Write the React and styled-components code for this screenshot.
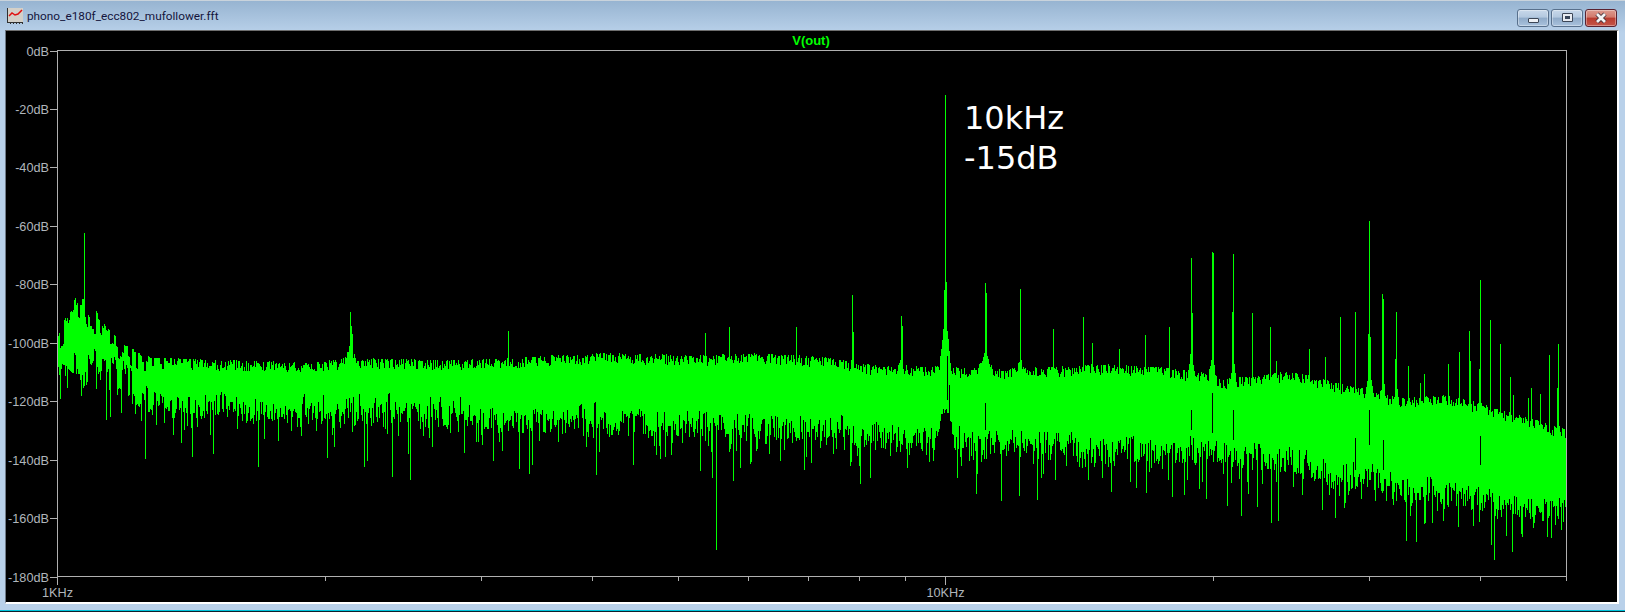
import React, { useMemo } from "react";
import styled, { createGlobalStyle } from "styled-components";

const GlobalStyle = createGlobalStyle`
    html, body {
        margin: 0;
        height: 100%;
        background: #10202c;
        overflow: hidden;
    }
`;

// plot frame in page pixels
const LEFT = 57.5;
const RIGHT = 1566.5;
const TOP = 50.5;
const BOTTOM = 576.5;
const DECADE = 888;

const dbTicks = [0, -20, -40, -60, -80, -100, -120, -140, -160, -180];
const freqTicks = [2, 3, 4, 5, 6, 7, 8, 9, 20, 30, 40, 50];

// [x, y] points read off the trace
const upperEdge = [
    [57, 338], [62, 325], [70, 305], [78, 293], [84, 298], [90, 312], [96, 310], [105, 326],
    [118, 338], [127, 343], [135, 350], [150, 357], [160, 358], [200, 359], [300, 362], [350, 358],
    [460, 360], [500, 358], [600, 353], [700, 355], [760, 353], [830, 357], [860, 364], [930, 366],
    [1000, 369], [1100, 364], [1160, 367], [1200, 372], [1220, 379], [1290, 371], [1340, 383],
    [1400, 397], [1450, 395], [1500, 409], [1566, 429],
];
const lowerEdge = [
    [57, 372], [80, 366], [100, 362], [120, 376], [140, 396], [160, 408], [300, 412], [350, 412],
    [460, 416], [500, 422], [700, 426], [860, 432], [900, 442], [1000, 443], [1100, 452], [1200, 455],
    [1220, 455], [1290, 464], [1340, 474], [1400, 489], [1450, 496], [1500, 506], [1566, 514],
];

// harmonics: [x, top of the line]
const lines = [
    [84, 233], [350, 312], [351, 326], [352, 334], [508, 331], [705, 333], [729, 327], [796, 327],
    [852, 295], [853, 332], [901, 316], [902, 326], [945, 95], [946, 282], [944, 290], [985, 283],
    [986, 293], [1020, 289], [1053, 329], [1083, 317], [1092, 343], [1119, 349], [1145, 335], [1169, 327],
    [1191, 258], [1192, 313], [1212, 252], [1213, 253], [1233, 254], [1232, 312], [1252, 313], [1270, 327],
    [1276, 361], [1309, 349], [1325, 357], [1340, 317], [1355, 312], [1369, 221], [1368, 334], [1370, 337],
    [1382, 294], [1383, 299], [1396, 312], [1395, 359], [1408, 366], [1420, 383], [1424, 374], [1448, 364],
    [1459, 352], [1469, 331], [1470, 361], [1480, 280], [1479, 369], [1490, 320], [1500, 344], [1510, 377],
    [1513, 395], [1528, 398], [1531, 388], [1540, 394], [1549, 355], [1558, 344], [1557, 388], [1566, 292],
];

// [x, half width, top]
const skirts = [
    [350, 8, 340], [852, 3, 350], [901, 3, 340], [945, 9, 300], [985, 13, 350], [1020, 5, 352], [1191, 6, 345],
    [1212, 6, 348], [1233, 5, 352], [1369, 5, 352], [1383, 4, 368], [1396, 3, 374], [1469, 3, 398], [1480, 6, 402],
    [1558, 3, 410],
];

// [x, bottom of the line]
const dips = [
    [60, 399], [106, 420], [110, 417], [145, 459], [192, 457], [213, 454], [258, 467], [327, 458], [364, 467],
    [367, 461], [392, 477], [410, 480], [464, 453], [493, 461], [519, 469], [529, 474], [532, 465], [596, 475],
    [633, 465], [665, 457], [700, 471], [712, 478], [716, 550], [733, 481], [740, 468], [750, 464], [804, 470],
    [859, 466], [860, 484], [870, 478], [957, 478], [976, 494], [1001, 501], [1019, 496], [1037, 500], [1055, 480],
    [1088, 480], [1102, 478], [1130, 482], [1136, 488], [1172, 497], [1184, 495], [1206, 499], [1227, 506],
    [1241, 516], [1257, 507], [1271, 523], [1278, 521], [1322, 510], [1335, 518], [1344, 508], [1406, 541],
    [1416, 542], [1432, 523], [1443, 521], [1473, 526], [1491, 545], [1494, 560], [1506, 536], [1512, 552],
    [1522, 537], [1533, 528], [1555, 525], [1561, 530],
];

// black slits inside the trace next to the harmonics: [x, from, to]
const slits = [
    [947, 356, 400], [949, 385, 410], [985, 403, 430], [1191, 410, 430], [1212, 393, 433],
    [1233, 410, 440], [1355, 438, 470], [1369, 410, 445], [1383, 440, 470], [1480, 436, 465],
];

const interpolate = (points, x) => {
    for (let i = 1; i < points.length; i++) {
        if (x <= points[i][0]) {
            const [x0, y0] = points[i - 1];
            const [x1, y1] = points[i];
            return y0 + ((y1 - y0) * (x - x0)) / (x1 - x0);
        }
    }
    return points[points.length - 1][1];
};

const seeded = (seed) => () => {
    seed = (seed + 0x6d2b79f5) | 0;
    let t = Math.imul(seed ^ (seed >>> 15), 1 | seed);
    t = (t + Math.imul(t ^ (t >>> 7), 61 | t)) ^ t;
    return ((t ^ (t >>> 14)) >>> 0) / 4294967296;
};

const buildTrace = () => {
    const random = seeded(4711);
    const peak = Object.fromEntries(lines);
    const dip = Object.fromEntries(dips);
    let d = "";
    let a = 0;
    let b = 0;
    let drift = 0;

    for (let x = 57; x <= 1566; x++) {
        const rough = Math.max(0, Math.min(1, (175 - x) / 60));
        if (x >= 175 || x % 2 === 0) {
            a = random();
            b = random();
        }
        // the lower edge wanders a little, in clumps
        drift = drift * 0.86 + (random() - 0.5) * 5;

        let top = interpolate(upperEdge, x) + Math.pow(a, 1.5) * (11 + rough * 13);
        let bottom = interpolate(lowerEdge, x) + drift + (b - 0.6) * (26 + rough * 10);

        // plenty of longer strokes below the solid band
        if (random() < 0.28) bottom += Math.pow(random(), 1.5) * 30;

        skirts.forEach(([px, w, skirtTop]) => {
            const dist = Math.abs(x - px);
            if (dist < w) {
                const k = Math.pow(1 - dist / w, 2.2);
                top = Math.min(top, top - (top - skirtTop) * k);
            }
        });

        // the band pinches right at the fundamental
        if (x > 934 && x < 958) bottom = Math.min(bottom, 408 + Math.max(0, Math.abs(x - 945) - 4) * 7 + random() * 8);

        if (peak[x]) top = peak[x];
        if (dip[x]) bottom = dip[x];

        d += `M${x + 0.5} ${Math.round(top)}V${Math.round(bottom)}`;
    }
    return d;
};

const Spectrum = () => {
    const trace = useMemo(buildTrace, []);
    const logX = (k) => LEFT + DECADE * Math.log10(k);

    return (
        <PlotSvg viewBox="6 31 1611 571">
            <Trace d={trace} />
            <Slits d={slits.map(([x, a, b]) => `M${x + 0.5} ${a}V${b}`).join("")} />
            <Axis d={`M${LEFT} ${TOP}H${RIGHT}V${BOTTOM}H${LEFT}Z`} />
            {dbTicks.map((db, i) => {
                const y = Math.round(TOP + (i * (BOTTOM - TOP)) / 9) + 0.5;
                return (
                    <g key={db}>
                        <Axis d={`M50 ${y}H${LEFT}`} />
                        <AxisLabel x={49} y={y + 4} textAnchor="end">
                            {db}dB
                        </AxisLabel>
                    </g>
                );
            })}
            {freqTicks.map((k) => (
                <Axis key={k} d={`M${Math.round(logX(k)) + 0.5} ${BOTTOM}v4`} />
            ))}
            <Axis d={`M${LEFT} ${BOTTOM}v8`} />
            <Axis d={`M${logX(10)} ${BOTTOM}v8`} />
            <AxisLabel x={LEFT} y={597} textAnchor="middle">
                1KHz
            </AxisLabel>
            <AxisLabel x={logX(10)} y={597} textAnchor="middle">
                10KHz
            </AxisLabel>
            <TraceName x={811} y={45} textAnchor="middle">
                V(out)
            </TraceName>
        </PlotSvg>
    );
};

const AppIcon = () => (
    <svg width="16" height="16" viewBox="0 0 16 16" shapeRendering="crispEdges">
        <rect x="0" y="0" width="16" height="15" fill="#d4d0c8" />
        <path d="M0.5 0V14M0 14.5H16M3.5 14v2M6.5 14v2M9.5 14v2M12.5 14v2M15.5 14v2" stroke="#303030" fill="none" />
        <path
            d="M2 8L5 5L8 7L11 6L15 2"
            stroke="#e01010"
            strokeWidth="1.5"
            fill="none"
            shapeRendering="auto"
        />
    </svg>
);

export default function App() {
    return (
        <>
            <GlobalStyle />
            <Window>
                <TitleBar>
                    <AppIcon />
                    <Title>phono_e180f_ecc802_mufollower.fft</Title>
                    <Controls>
                        <ControlButton aria-label="minimize">
                            <MinimizeGlyph />
                        </ControlButton>
                        <ControlButton aria-label="maximize">
                            <MaximizeGlyph />
                        </ControlButton>
                        <ControlButton $close aria-label="close">
                            <svg width="14" height="12" viewBox="0 0 14 12">
                                <path d="M3 2L11 10M11 2L3 10" stroke="#3a2a34" strokeWidth="4.4" />
                                <path d="M3 2L11 10M11 2L3 10" stroke="#f4f4f4" strokeWidth="2.8" />
                            </svg>
                        </ControlButton>
                    </Controls>
                </TitleBar>
                <PlotPane>
                    <Spectrum />
                    <Annotation>
                        10kHz
                        <br />
                        -15dB
                    </Annotation>
                </PlotPane>
            </Window>
        </>
    );
}

const Window = styled.div`
    height: 610px;
    box-sizing: border-box;
    padding: 0 6px 6px 5px;
    display: flex;
    flex-direction: column;
    background: linear-gradient(#97b4d1 0, #b9d1ea 32px);
    border-top: 1px solid #c9d3dc;
    box-shadow: 0 1px 0 #00c4dc;
`;

const TitleBar = styled.div`
    height: 29px;
    flex: none;
    display: flex;
    align-items: center;
    padding: 0 0 0 2px;
`;

const Title = styled.span`
    margin: 1px 0 0 4px;
    font: 11.8px/16px Roboto, "Noto Sans", sans-serif;
    color: #14143c;
`;

const Controls = styled.div`
    margin-left: auto;
    margin-right: 2px;
    align-self: flex-start;
    padding-top: 8px;
    display: flex;
    gap: 2px;
`;

const ControlButton = styled.div`
    width: 32px;
    height: 18px;
    box-sizing: border-box;
    display: flex;
    align-items: center;
    justify-content: center;
    border: 1px solid ${(p) => (p.$close ? "#5a2230" : "#58708c")};
    border-radius: 3px;
    box-shadow: inset 0 0 0 1px rgba(255, 255, 255, 0.35);
    background: ${(p) =>
        p.$close
            ? "linear-gradient(#dc9a8e 0, #d2796c 45%, #b93b2e 50%, #c4564a 100%)"
            : "linear-gradient(#c8d8ea 0, #b3c8df 45%, #8faac8 50%, #a9c2dd 100%)"};
`;

const MinimizeGlyph = styled.div`
    width: 11px;
    height: 5px;
    margin-top: 4px;
    box-sizing: border-box;
    background: #eef1f5;
    border: 1px solid #3c4656;
    border-radius: 1px;
`;

const MaximizeGlyph = styled.div`
    width: 11px;
    height: 9px;
    box-sizing: border-box;
    background: #39465a;
    border: 1px solid #3c4656;
    border-radius: 1px;
    box-shadow: inset 0 0 0 2px #e8ecf2;
    margin-bottom: 1px;
`;

const PlotPane = styled.div`
    position: relative;
    flex: 1;
    min-height: 0;
    background: #000;
    border-style: solid;
    border-color: #6e6e6e #fff #fff #6e7a88;
    border-width: 1px 2px 2px 1px;
`;

const PlotSvg = styled.svg`
    display: block;
    width: 1611px;
    height: 571px;
`;

const Trace = styled.path`
    fill: none;
    stroke: #00ff00;
    stroke-width: 1;
    shape-rendering: crispEdges;
`;

const Slits = styled(Trace)`
    stroke: #000;
`;

const Axis = styled.path`
    fill: none;
    stroke: #b0b0b0;
    stroke-width: 1;
    shape-rendering: crispEdges;
`;

const AxisLabel = styled.text`
    font: 12.7px "Liberation Sans", Arial, sans-serif;
    fill: #b0b6bc;
`;

const TraceName = styled.text`
    font: bold 13px "Liberation Sans", Arial, sans-serif;
    fill: #00ff00;
`;

const Annotation = styled.div`
    position: absolute;
    left: 958px;
    top: 67px;
    font: 32px/40px "DejaVu Sans", sans-serif;
    color: #fff;
`;
